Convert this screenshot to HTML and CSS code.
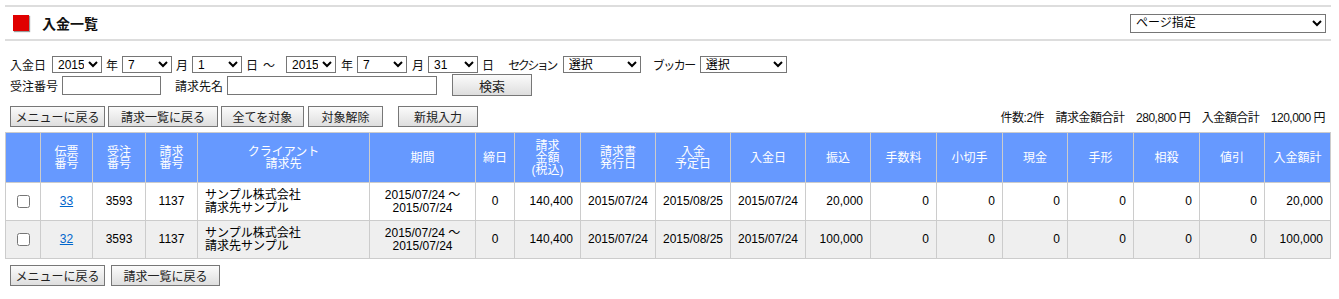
FILE: index.html
```html
<!DOCTYPE html>
<html lang="ja">
<head>
    <meta charset="UTF-8">
    <title>入金一覧</title>
    <link rel="stylesheet" href="styles.css">
</head>
<body>
<div class="wrap">
    <div class="title-bar">
        <div class="title">
            <span class="mark"></span>
            <h1>入金一覧</h1>
        </div>
        <select class="page-select">
            <option>ページ指定</option>
        </select>
    </div>

    <form class="search" action="#" method="post">
        <div class="search-row">
            <label class="lbl-date">入金日</label>
            <select class="sel-date"><option>2015</option></select>
            <span>年</span>
            <select class="sel-date"><option>7</option></select>
            <span>月</span>
            <select class="sel-date"><option>1</option></select>
            <span>日</span>
            <span class="tilde">～</span>
            <select class="sel-date"><option>2015</option></select>
            <span class="unit">年</span>
            <select class="sel-date"><option>7</option></select>
            <span class="unit">月</span>
            <select class="sel-date"><option>31</option></select>
            <span>日</span>
            <label class="lbl-section">セクション</label>
            <select class="sel-section"><option>選択</option></select>
            <label class="lbl-booker">ブッカー</label>
            <select class="sel-booker"><option>選択</option></select>
        </div>
        <div class="search-row row2">
            <label>受注番号</label>
            <input type="text" class="in-order">
            <label class="lbl-client">請求先名</label>
            <input type="text" class="in-client">
            <button type="submit" class="btn btn-search">検索</button>
        </div>
    </form>

    <div class="toolbar">
        <div class="btns">
            <button class="btn w-menu">メニューに戻る</button>
            <button class="btn w-list">請求一覧に戻る</button>
            <button class="btn w-all">全てを対象</button>
            <button class="btn w-clear">対象解除</button>
            <button class="btn w-new">新規入力</button>
        </div>
        <div class="summary">件数:2件　請求金額合計　280,800 円　入金額合計　120,000 円</div>
    </div>

    <table class="list">
        <colgroup>
            <col style="width:35px"><col style="width:52px"><col style="width:53px"><col style="width:52px">
            <col style="width:172px"><col style="width:106px"><col style="width:39px"><col style="width:66px">
            <col style="width:75px"><col style="width:75px"><col style="width:75px"><col style="width:65px">
            <col style="width:66px"><col style="width:66px"><col style="width:65px"><col style="width:66px">
            <col style="width:66px"><col style="width:65px"><col style="width:66px">
        </colgroup>
        <thead>
            <tr>
                <th></th>
                <th>伝票<br>番号</th>
                <th>受注<br>番号</th>
                <th>請求<br>番号</th>
                <th>クライアント<br>請求先</th>
                <th>期間</th>
                <th>締日</th>
                <th>請求<br>金額<br>(税込)</th>
                <th>請求書<br>発行日</th>
                <th>入金<br>予定日</th>
                <th>入金日</th>
                <th>振込</th>
                <th>手数料</th>
                <th>小切手</th>
                <th>現金</th>
                <th>手形</th>
                <th>相殺</th>
                <th>値引</th>
                <th>入金額計</th>
            </tr>
        </thead>
        <tbody>
            <tr>
                <td class="c"><input type="checkbox"></td>
                <td class="c"><a href="#">33</a></td>
                <td class="c">3593</td>
                <td class="c">1137</td>
                <td class="l">サンプル株式会社<br>請求先サンプル</td>
                <td class="c">2015/07/24 ～<br>2015/07/24</td>
                <td class="c">0</td>
                <td class="r">140,400</td>
                <td class="c">2015/07/24</td>
                <td class="c">2015/08/25</td>
                <td class="c">2015/07/24</td>
                <td class="r">20,000</td>
                <td class="r">0</td>
                <td class="r">0</td>
                <td class="r">0</td>
                <td class="r">0</td>
                <td class="r">0</td>
                <td class="r">0</td>
                <td class="r">20,000</td>
            </tr>
            <tr class="even">
                <td class="c"><input type="checkbox"></td>
                <td class="c"><a href="#">32</a></td>
                <td class="c">3593</td>
                <td class="c">1137</td>
                <td class="l">サンプル株式会社<br>請求先サンプル</td>
                <td class="c">2015/07/24 ～<br>2015/07/24</td>
                <td class="c">0</td>
                <td class="r">140,400</td>
                <td class="c">2015/07/24</td>
                <td class="c">2015/08/25</td>
                <td class="c">2015/07/24</td>
                <td class="r">100,000</td>
                <td class="r">0</td>
                <td class="r">0</td>
                <td class="r">0</td>
                <td class="r">0</td>
                <td class="r">0</td>
                <td class="r">0</td>
                <td class="r">100,000</td>
            </tr>
        </tbody>
    </table>

    <div class="btns bottom">
        <button class="btn w-menu">メニューに戻る</button>
        <button class="btn w-list">請求一覧に戻る</button>
    </div>
</div>
</body>
</html>
```

FILE: styles.css
```css
body {
    margin: 0;
    font-family: "Liberation Sans", "Noto Sans CJK JP", sans-serif;
    font-size: 12px;
    color: #111;
    background-color: #ffffff;
}
.wrap {
    margin: 5px 0 0 5px;
    width: 1326px;
}

/* タイトル */
.title-bar {
    height: 32px;
    border-top: 2px solid #dddddd;
    border-bottom: 2px solid #dddddd;
    display: flex;
    align-items: center;
    justify-content: space-between;
    padding: 0 5px 0 8px;
}
.title {
    display: flex;
    align-items: center;
}
.mark {
    width: 16px;
    height: 16px;
    background-color: #e00000;
    box-shadow: 1px 1px 1px #999;
}
.title h1 {
    margin: 0 0 0 13px;
    font-size: 14px;
    font-weight: bold;
}
.page-select {
    width: 196px;
    height: 19px;
}

select, input[type="text"] {
    font-family: inherit;
    font-size: 12px;
    border: 1px solid #767676;
    background-color: #fff;
    box-sizing: border-box;
    border-radius: 0;
    padding: 0 1px;
    margin: 0;
    color: #000;
}

/* 検索条件 */
.search {
    margin: 15px 0 0 5px;
}
.search-row {
    display: flex;
    align-items: center;
    gap: 4px;
    height: 17px;
}
.search-row.row2 {
    margin-top: 1px;
    height: 22px;
}
.lbl-date {
    margin-right: 2px;
}
.sel-date {
    width: 50px;
    height: 17px;
}
.unit {
    margin-left: 1px;
}
.tilde {
    margin: 0 7px 0 1px;
}
.lbl-section {
    margin-left: 10px;
    letter-spacing: -2.5px;
    margin-right: 3px;
}
.sel-section {
    width: 78px;
    height: 17px;
}
.lbl-booker {
    margin-left: 8px;
    letter-spacing: -1.5px;
    margin-right: 1px;
}
.sel-booker {
    width: 87px;
    height: 17px;
}
.in-order {
    width: 99px;
    height: 19px;
}
.lbl-client {
    margin-left: 10px;
}
.in-client {
    width: 210px;
    height: 19px;
}

/* ボタン */
.btn {
    font-family: inherit;
    font-size: 12px;
    color: #222;
    height: 21px;
    padding: 0;
    border: 1px solid #777;
    border-radius: 0;
    background: linear-gradient(#fbfbfb, #dedede);
    box-sizing: border-box;
    cursor: pointer;
}
.btn-search {
    width: 80px;
    height: 22px;
    margin-left: 11px;
    font-size: 13px;
}
.toolbar {
    display: flex;
    justify-content: space-between;
    align-items: center;
    margin-top: 10px;
    padding: 0 6px 0 5px;
}
.btns {
    display: flex;
    gap: 3px;
}
.w-menu { width: 95px; }
.w-list { width: 110px; }
.w-all { width: 83px; }
.w-clear { width: 75px; margin-left: 1px; }
.w-new { width: 80px; margin-left: 12px; }
.summary {
    white-space: nowrap;
    letter-spacing: -0.5px;
}

/* 一覧 */
.list {
    margin-top: 5px;
    width: 1326px;
    table-layout: fixed;
    border-collapse: collapse;
}
.list th, .list td {
    border: 1px solid #cccccc;
    padding: 0;
}
.list th {
    background-color: #6699ff;
    color: #ffffff;
    font-weight: normal;
    height: 49px;
    line-height: 12px;
    text-align: center;
}
.list td {
    height: 37px;
    line-height: 13px;
    color: #000;
}
.list tr.even td {
    background-color: #efefef;
}
.list td.c { text-align: center; }
.list td.r { text-align: right; padding-right: 7px; }
.list td.l { text-align: left; padding-left: 7px; }
.list td a {
    color: #0066cc;
}
.list input[type="checkbox"] {
    margin: 0;
    width: 13px;
    height: 13px;
    vertical-align: middle;
}

.btns.bottom {
    margin: 6px 0 0 5px;
    gap: 6px;
}
.btns.bottom .w-list {
    width: 109px;
}
```
